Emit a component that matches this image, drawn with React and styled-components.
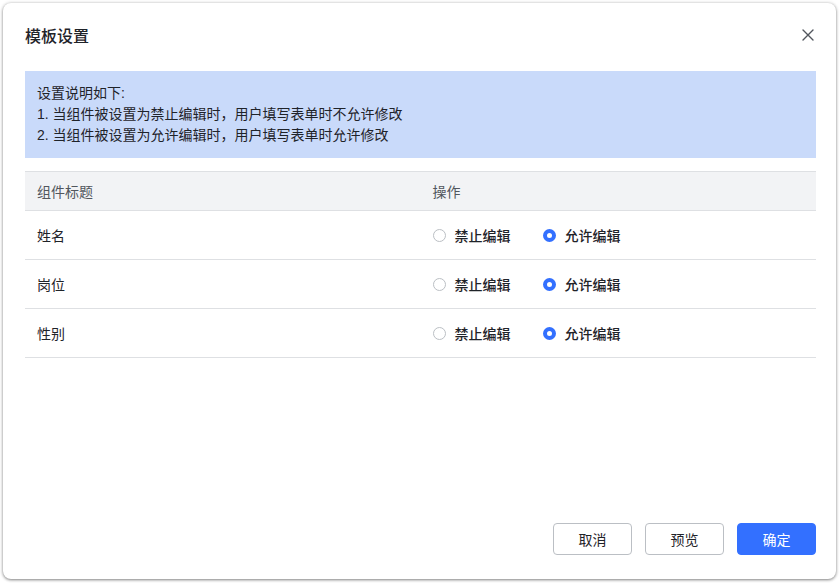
import React, { useState } from 'react';
import styled, { createGlobalStyle } from 'styled-components';

const GlobalStyle = createGlobalStyle`
  body {
    margin: 0;
    background: #ffffff;
    font-family: "Liberation Sans", "Noto Sans CJK SC", sans-serif;
  }
`

const Page = styled.div`
  padding: 3px 4px 6px 3px;
`

const Dialog = styled.div`
  box-sizing: border-box;
  height: 576px;
  background: #fff;
  border-radius: 8px;
  box-shadow: 0 1px 3px rgba(0, 0, 0, 0.45), 0 0 4px rgba(0, 0, 0, 0.12);
  display: flex;
  flex-direction: column;
  padding: 20px 20px 24px 22px;
`

const Header = styled.div`
  display: flex;
  align-items: center;
  justify-content: space-between;
  height: 24px;
`

const Title = styled.h2`
  margin: 0;
  font-size: 16px;
  font-weight: 500;
  color: #1f2329;
`

const CloseButton = styled.button`
  border: 0;
  background: none;
  padding: 0;
  width: 16px;
  height: 16px;
  display: flex;
  align-items: center;
  justify-content: center;
  cursor: pointer;
`

const Body = styled.div`
  margin-top: 24px;
  width: 791px;
`

const Notice = styled.div`
  background: #c9dafa;
  padding: 12px 12px;
  font-size: 14px;
  line-height: 21px;
  color: #1f2329;
`

const Table = styled.div`
  margin-top: 13px;
  border-top: 1px solid #dee0e3;
`

const Row = styled.div`
  display: grid;
  grid-template-columns: 1fr 1fr;
  align-items: center;
  height: ${p => (p.$head ? '38px' : '48px')};
  background: ${p => (p.$head ? '#f2f3f5' : '#fff')};
  border-bottom: 1px solid #dee0e3;
  font-size: 14px;
  color: ${p => (p.$head ? '#51565d' : '#1f2329')};
`

const Cell = styled.div`
  padding: 0 12px;
  display: flex;
  align-items: center;
  gap: 32px;
`

const RadioLabel = styled.label`
  display: flex;
  align-items: center;
  gap: 9px;
  cursor: pointer;
  font-weight: 500;
  color: #1f2329;
`

const Dot = styled.span`
  box-sizing: border-box;
  width: 13px;
  height: 13px;
  border-radius: 50%;
  border: ${p => (p.$on ? '4px solid #3370ff' : '1px solid #bbbfc4')};
  background: #fff;
`

const Footer = styled.div`
  margin-top: auto;
  display: flex;
  justify-content: flex-end;
  gap: 13px;
  width: 791px;
`

const Button = styled.button`
  width: 79px;
  height: 32px;
  border-radius: 4px;
  font-family: inherit;
  font-size: 14px;
  cursor: pointer;
  border: 1px solid ${p => (p.$primary ? '#3370ff' : '#bbbfc4')};
  background: ${p => (p.$primary ? '#3370ff' : '#fff')};
  color: ${p => (p.$primary ? '#fff' : '#1f2329')};
`

const fields = ['姓名', '岗位', '性别']

const App = () => {
  const [modes, setModes] = useState({ 姓名: 'allow', 岗位: 'allow', 性别: 'allow' })

  const pick = (name, value) => setModes({ ...modes, [name]: value })

  return (
    <Page>
      <GlobalStyle />
      <Dialog>
        <Header>
          <Title>模板设置</Title>
          <CloseButton aria-label="关闭">
            <svg width="12" height="12" viewBox="0 0 12 12">
              <path d="M1 1L11 11M11 1L1 11" stroke="#51565d" strokeWidth="1.4" strokeLinecap="round" />
            </svg>
          </CloseButton>
        </Header>
        <Body>
          <Notice>
            <div>设置说明如下:</div>
            <div>1. 当组件被设置为禁止编辑时，用户填写表单时不允许修改</div>
            <div>2. 当组件被设置为允许编辑时，用户填写表单时允许修改</div>
          </Notice>
          <Table>
            <Row $head>
              <Cell>组件标题</Cell>
              <Cell>操作</Cell>
            </Row>
            {fields.map(name => (
              <Row key={name}>
                <Cell>{name}</Cell>
                <Cell>
                  <RadioLabel onClick={() => pick(name, 'deny')}>
                    <Dot $on={modes[name] === 'deny'} />
                    禁止编辑
                  </RadioLabel>
                  <RadioLabel onClick={() => pick(name, 'allow')}>
                    <Dot $on={modes[name] === 'allow'} />
                    允许编辑
                  </RadioLabel>
                </Cell>
              </Row>
            ))}
          </Table>
        </Body>
        <Footer>
          <Button>取消</Button>
          <Button>预览</Button>
          <Button $primary>确定</Button>
        </Footer>
      </Dialog>
    </Page>
  )
}

export default App;
